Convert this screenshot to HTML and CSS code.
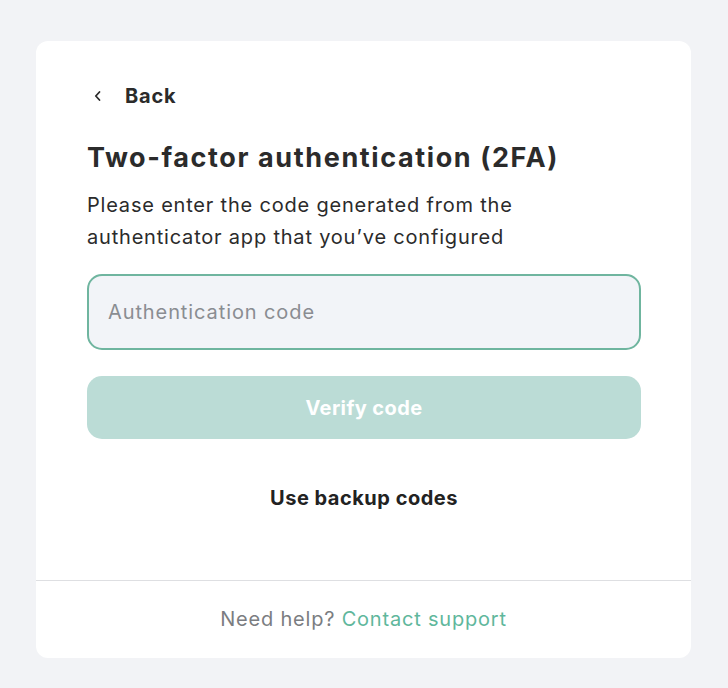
FILE: index.html
```html
<!DOCTYPE html>
<html lang="en">
<head>
    <meta charset="UTF-8">
    <meta name="viewport" content="width=device-width, initial-scale=1.0">
    <title>Two-factor authentication</title>
    <link rel="stylesheet" href="styles.css">
</head>
<body>
    <div class="card">
        <div class="card-body">
            <a class="back-link" href="#">
                <svg class="back-icon" width="10" height="12" viewBox="0 0 10 12" fill="none">
                    <path d="M6.5 2 L2.8 6 L6.5 10" stroke="#2b2b2b" stroke-width="1.8" stroke-linecap="round" stroke-linejoin="round"/>
                </svg>
                <span>Back</span>
            </a>

            <h1 class="title">Two-factor authentication (2FA)</h1>
            <p class="subtitle">Please enter the code generated from the authenticator app that you’ve configured</p>

            <!-- Code form -->
            <form class="code-form">
                <input class="code-input" type="text" placeholder="Authentication code">
                <button class="verify-btn" type="button" disabled>Verify code</button>
            </form>

            <a class="backup-link" href="#">Use backup codes</a>
        </div>

        <div class="card-footer">
            Need help? <a href="#">Contact support</a>
        </div>
    </div>
</body>
</html>
```

FILE: styles.css
```css
/* Page */
body {
    background-color: #f2f3f6;
    margin: 0;
    padding: 41px 37px 30px 36px;
    font-family: "Inter", "Noto Sans", sans-serif;
    color: #2b2b2b;
}

/* Card */
.card {
    background: #fff;
    border-radius: 12px;
    width: 655px;
}

.card-body {
    padding: 42px 50px 70px 51px;
    display: flex;
    flex-direction: column;
}

/* Back link */
.back-link {
    display: flex;
    align-items: center;
    gap: 22px;
    color: #2b2b2b;
    text-decoration: none;
    font-weight: 700;
    font-size: 20px;
    letter-spacing: 0.8px;
    height: 26px;
    padding-left: 6px;
}

.title {
    font-size: 27px;
    font-weight: 700;
    letter-spacing: 1.6px;
    margin: 32px 0 0;
    line-height: 34px;
}

.subtitle {
    font-size: 20px;
    letter-spacing: 0.8px;
    line-height: 32px;
    margin: 14px 0 0;
    max-width: 460px;
}

/* Form */
.code-form {
    display: flex;
    flex-direction: column;
    gap: 26px;
    margin-top: 21px;
}

.code-input {
    box-sizing: border-box;
    height: 76px;
    border: 2px solid #6fb59f;
    border-radius: 15px;
    background: #f2f4f8;
    padding: 0 19px;
    font-family: inherit;
    font-size: 20px;
    letter-spacing: 0.9px;
    color: #2b2b2b;
    outline: none;
}

.code-input::placeholder {
    color: #8a8d92;
}

.verify-btn {
    height: 63px;
    border: none;
    border-radius: 15px;
    background: #bbdcd6;
    color: #fff;
    font-family: inherit;
    font-size: 20px;
    font-weight: 700;
    letter-spacing: 0.4px;
}

.backup-link {
    align-self: center;
    margin-top: 47px;
    color: #222;
    text-decoration: none;
    font-size: 20px;
    font-weight: 700;
    letter-spacing: 0.5px;
    line-height: 24px;
}

/* Footer */
.card-footer {
    border-top: 1px solid #dedfe2;
    text-align: center;
    padding: 26px 0 27px;
    font-size: 20px;
    letter-spacing: 0.8px;
    line-height: 24px;
    color: #7b7d81;
}

.card-footer a {
    color: #5fb79c;
    text-decoration: none;
}
```
